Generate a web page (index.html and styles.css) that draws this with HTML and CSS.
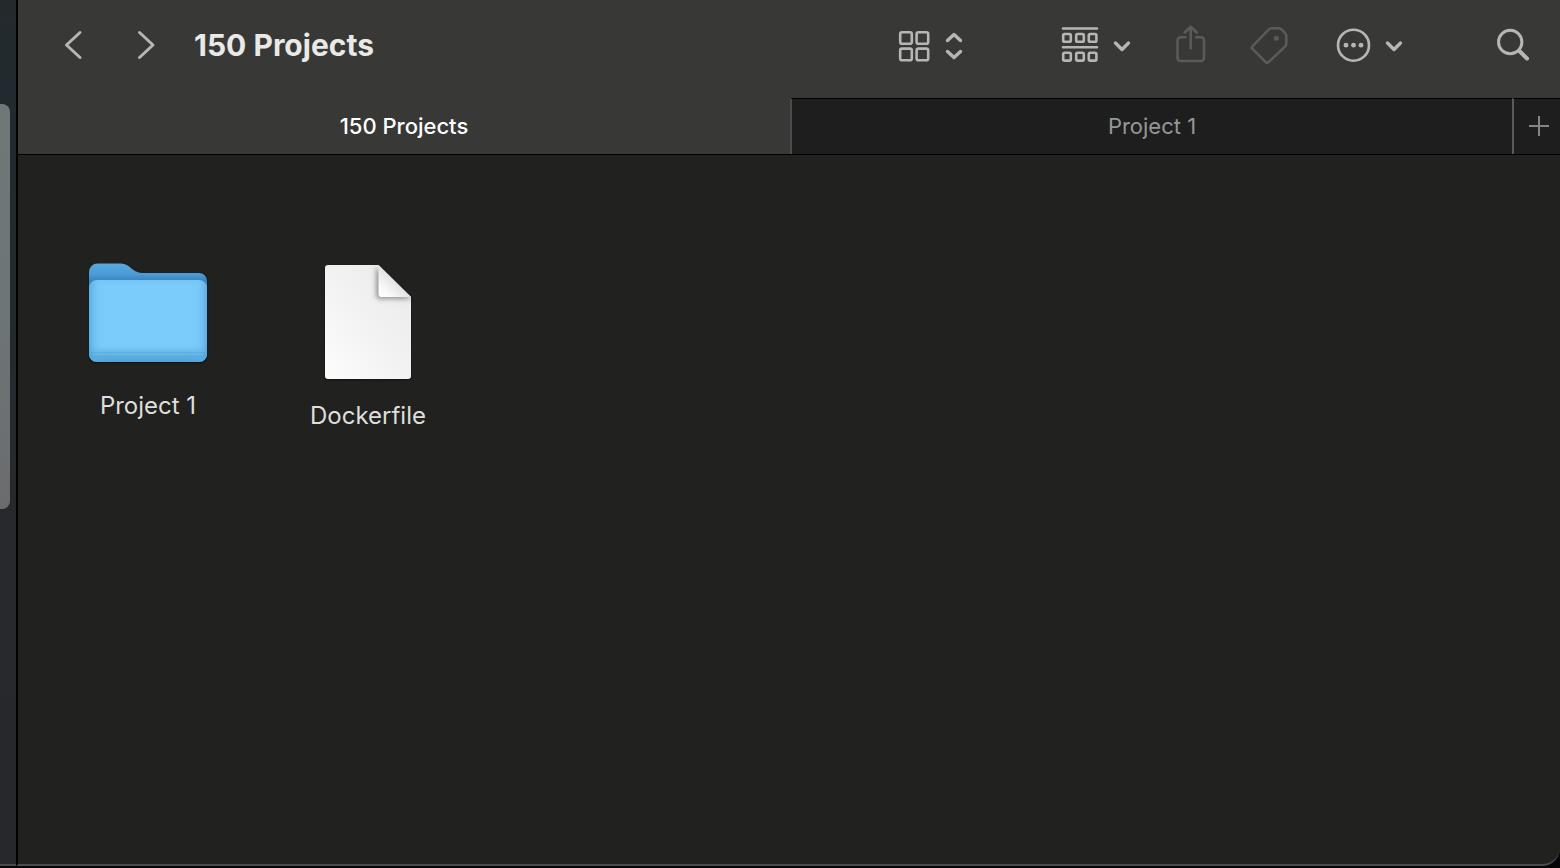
FILE: index.html
```html
<!DOCTYPE html>
<html lang="en">
<head>
<meta charset="utf-8">
<meta name="viewport" content="width=device-width, initial-scale=1">
<title>150 Projects</title>
<link rel="stylesheet" href="styles.css">
</head>
<body>
<div class="desktop">
  <aside class="strip"><div class="strip-thumb"></div></aside>
  <div class="window">
    <header class="toolbar">
      <nav class="history">
        <button class="tool" type="button" aria-label="Back">
          <svg width="18" height="30" viewBox="0 0 18 30"><path class="line line-nav" d="M16 2.500 2.500 15 16 27.500"/></svg>
        </button>
        <button class="tool" type="button" aria-label="Forward">
          <svg width="18" height="30" viewBox="0 0 18 30"><path class="line line-nav" d="M2.500 2.500 16 15 2.500 27.500"/></svg>
        </button>
      </nav>
      <h1 class="title">150 Projects</h1>
      <div class="actions">
        <button class="tool" type="button" aria-label="View as icons">
          <svg width="66" height="34" viewBox="0 -2 66 34">
            <g class="line">
              <rect x="2.200" y="2.200" width="11.600" height="11.600" rx="1.800"/>
              <rect x="18.600" y="2.200" width="11.600" height="11.600" rx="1.800"/>
              <rect x="2.200" y="18.600" width="11.600" height="11.600" rx="1.800"/>
              <rect x="18.600" y="18.600" width="11.600" height="11.600" rx="1.800"/>
            </g>
            <path class="line line-bold" d="M49.500 10.500 56 4.500l6.500 6M49.500 21.500l6.500 6 6.500-6"/>
          </svg>
        </button>
        <button class="tool tool-group" type="button" aria-label="Group items">
          <svg width="70" height="38" viewBox="0 0 70 38">
            <g class="line">
              <path d="M2 2.500h34M2 21.300h34"/>
              <rect x="2.200" y="8" width="7.600" height="7.800" rx="1.400"/>
              <rect x="15.200" y="8" width="7.600" height="7.800" rx="1.400"/>
              <rect x="27.800" y="8" width="7.600" height="7.800" rx="1.400"/>
              <rect x="2.200" y="26.800" width="7.600" height="7.800" rx="1.400"/>
              <rect x="15.200" y="26.800" width="7.600" height="7.800" rx="1.400"/>
              <rect x="27.800" y="26.800" width="7.600" height="7.800" rx="1.400"/>
            </g>
            <path class="line line-bold" d="M54.500 17l6.500 6.500 6.500-6.500"/>
          </svg>
        </button>
        <button class="tool" type="button" aria-label="Share" disabled>
          <svg width="31" height="40" viewBox="0 0 31 40">
            <path class="line line-off" d="M10.500 12.300H5.500A3 3 0 0 0 2.500 15.300v17.700a3 3 0 0 0 3 3h20.500a3 3 0 0 0 3-3V15.300a3 3 0 0 0-3-3H21M15.700 23.500V2M9.700 7.500l6-5.700 6 5.700"/>
          </svg>
        </button>
        <button class="tool" type="button" aria-label="Edit tags" disabled>
          <svg width="38" height="38" viewBox="0 0 38 38">
            <path class="line line-off" d="M21.800 2.200h6.500q2.200 0 3.600 1.500l3 3.200q1.400 1.500 1.400 3.500v7q0 2-1.400 3.400L18.600 36q-1.500 1.500-3 0L2.700 23.200q-1.500-1.500 0-3L18.600 3.600q1.400-1.400 3.200-1.400z"/>
            <circle class="dot-off" cx="26.400" cy="12.200" r="2.500"/>
          </svg>
        </button>
        <button class="tool tool-more" type="button" aria-label="More actions">
          <svg width="67" height="34" viewBox="0 0 67 34">
            <circle class="line" cx="17.500" cy="17.200" r="15.500"/>
            <g class="dot"><circle cx="10" cy="17.200" r="2.400"/><circle cx="17.500" cy="17.200" r="2.400"/><circle cx="25" cy="17.200" r="2.400"/></g>
            <path class="line line-bold" d="M51.500 15l6.500 6.500 6.500-6.500"/>
          </svg>
        </button>
        <button class="tool tool-search" type="button" aria-label="Search">
          <svg width="34" height="34" viewBox="0 0 34 34">
            <circle class="line line-lens" cx="14.200" cy="14" r="11.700"/>
            <path class="line line-handle" d="M23.500 23l7.500 7.500"/>
          </svg>
        </button>
      </div>
    </header>
    <div class="tabs">
      <button class="tab tab-active" type="button">150 Projects</button>
      <button class="tab tab-idle" type="button">Project 1</button>
      <button class="tab-add" type="button" aria-label="New tab">
        <svg width="22" height="22" viewBox="0 0 22 22"><path class="plus" d="M11 1v20M1 11h20"/></svg>
      </button>
    </div>
    <main class="files">
      <figure class="file">
        <svg width="120" height="107" viewBox="0 0 120 107">
          <defs>
            <linearGradient id="folder-back" x1="0" y1="0" x2="0" y2="1"><stop offset="0" stop-color="#5aaadf"/><stop offset=".11" stop-color="#4c9bd6"/><stop offset=".19" stop-color="#367dbd"/><stop offset="1" stop-color="#479dd2"/></linearGradient>
            <linearGradient id="folder-front" x1="0" y1="0" x2="0" y2="1"><stop offset="0" stop-color="#76c5f5"/><stop offset=".07" stop-color="#7bccfa"/><stop offset=".8" stop-color="#7bccfa"/><stop offset=".86" stop-color="#6ebfee"/><stop offset=".93" stop-color="#5fb0e2"/><stop offset="1" stop-color="#4da2d7"/></linearGradient>
            <linearGradient id="folder-edge"><stop offset="0" stop-color="#4ca1d8" stop-opacity=".7"/><stop offset=".08" stop-color="#65b8eb" stop-opacity=".15"/><stop offset=".15" stop-color="#7bccfa" stop-opacity="0"/><stop offset=".85" stop-color="#7bccfa" stop-opacity="0"/><stop offset=".93" stop-color="#65b8eb" stop-opacity=".15"/><stop offset="1" stop-color="#4ca1d8" stop-opacity=".7"/></linearGradient>
          </defs>
          <g class="shadow">
            <path fill="url(#folder-back)" d="M1 9a8.500 8.500 0 0 1 8.500-8.500H33c9 0 11.500 9.500 21 9.500h57a8 8 0 0 1 8 8v73a8 8 0 0 1-8 8H9a8 8 0 0 1-8-8z"/>
            <path fill="url(#folder-front)" d="M1 25a8 8 0 0 1 8-8h102a8 8 0 0 1 8 8v66a8 8 0 0 1-8 8H9a8 8 0 0 1-8-8z"/>
            <path fill="url(#folder-edge)" d="M1 25a8 8 0 0 1 8-8h102a8 8 0 0 1 8 8v66a8 8 0 0 1-8 8H9a8 8 0 0 1-8-8z"/>
            <path class="folder-groove" d="M1 89.500h118M2 93.500h116"/>
          </g>
        </svg>
        <figcaption class="name">Project 1</figcaption>
      </figure>
      <figure class="file">
        <svg width="88" height="117" viewBox="0 0 88 117">
          <defs>
            <linearGradient id="page" x1="0" y1="1" x2="1" y2="0"><stop offset="0" stop-color="#fdfdfd"/><stop offset=".5" stop-color="#f2f2f2"/><stop offset="1" stop-color="#eaeaea"/></linearGradient>
            <linearGradient id="curl" x1="0" y1="1" x2=".5" y2=".5"><stop offset="0" stop-color="#fff"/><stop offset=".4" stop-color="#f9f9f9"/><stop offset="1" stop-color="#e2e2e2"/></linearGradient>
            <clipPath id="page-clip"><path d="M4 2h50.500L87 34v79q0 3-3 3H4q-3 0-3-3V5q0-3 3-3z"/></clipPath>
            <filter id="soft" x="-50%" y="-50%" width="200%" height="200%"><feGaussianBlur stdDeviation="2.500"/></filter>
          </defs>
          <g class="shadow">
            <path fill="url(#page)" d="M4 2h50.500L87 34v79q0 3-3 3H4q-3 0-3-3V5q0-3 3-3z"/>
            <g clip-path="url(#page-clip)"><path class="curl-shadow" filter="url(#soft)" d="M52 4v28q0 4 4 4h32z"/></g>
            <path fill="url(#curl)" d="M54.500 2v29q0 3 3 3H87z"/>
          </g>
        </svg>
        <figcaption class="name">Dockerfile</figcaption>
      </figure>
    </main>
  </div>
</div>
</body>
</html>
```
FILE: styles.css
```css
* {
  box-sizing: border-box;
}

body {
  margin: 0;
  background: #060608;
  color: #dededc;
  font-family: Inter, "Liberation Sans", sans-serif;
}

button {
  margin: 0;
  padding: 0;
  border: 0;
  background: none;
  color: inherit;
  font: inherit;
}

svg {
  display: block;
  overflow: visible;
}

.desktop {
  display: flex;
  height: 100vh;
  padding-bottom: 2px;
}

.strip {
  flex: 0 0 16px;
  padding-top: 104px;
  background: linear-gradient(#242a2c 0, #222a2f 90px, #232a2d 40%, #27292c 62%, #27282b 100%);
  border-bottom: 2px solid #4a4a4a;
}

.strip-thumb {
  width: 10px;
  height: 405px;
  border-radius: 0 8px 8px 0;
  background: linear-gradient(#707779, #6d7576 50%, #6b6c6e);
}

.window {
  flex: 1;
  display: flex;
  flex-direction: column;
  min-width: 0;
  border-left: 2px solid #000;
  border-bottom: 2px solid #4c4c4b;
  border-bottom-right-radius: 18px;
  background: #212120;
}

.toolbar {
  display: flex;
  align-items: center;
  height: 98px;
  padding: 0 30px 8px 46px;
  background: #383836;
}

.history {
  display: flex;
  gap: 55px;
}

.title {
  margin: 0 0 0 39px;
  color: #e9e9e7;
  font-size: 30px;
  font-weight: 700;
  line-height: 36px;
  white-space: nowrap;
}

.actions {
  display: flex;
  align-items: center;
  gap: 44px;
  margin-left: auto;
}

.tool-group {
  margin-left: 53px;
}

.tool-more {
  margin-left: 4px;
}

.tool-search {
  margin-left: 49px;
}

.line {
  fill: none;
  stroke: #b6b6b4;
  stroke-width: 2.6;
  stroke-linecap: round;
  stroke-linejoin: round;
}

.line-nav {
  stroke-width: 3;
}

.line-lens {
  stroke-width: 3;
}

.line-bold {
  stroke-width: 3.4;
}

.line-handle {
  stroke-width: 4;
}

.line-off {
  stroke: #5a5a58;
}

.dot {
  fill: #b6b6b4;
}

.dot-off {
  fill: #5a5a58;
}

.tabs {
  display: flex;
  height: 57px;
  border-bottom: 1px solid #000;
  background: #1e1e1e;
}

.tab {
  min-width: 0;
  font-size: 22px;
  line-height: 28px;
}

.tab-active {
  flex: 773 1 0;
  background: #383836;
  color: #fff;
  font-weight: 500;
}

.tab-idle {
  flex: 721 1 0;
  padding-bottom: 2px;
  border-top: 1px solid #000;
  border-left: 2px solid #4b4b4a;
  color: #979796;
}

.tab-add {
  display: flex;
  flex: 0 0 48px;
  align-items: center;
  padding: 0 0 2px 14px;
  border-top: 1px solid #000;
  border-left: 2px solid #5a5a5a;
}

.plus {
  fill: none;
  stroke: #858584;
  stroke-width: 2;
}

.files {
  display: grid;
  grid-template-columns: repeat(auto-fill, 220px);
  align-items: start;
  padding: 108px 20px 20px;
}

.file {
  display: flex;
  flex-direction: column;
  align-items: center;
  gap: 21px;
  margin: 0;
}

.name {
  font-size: 24px;
  line-height: 30px;
}

.shadow {
  filter: drop-shadow(0 1px 1px rgba(0, 0, 0, 0.5));
}

.folder-groove {
  fill: none;
  stroke: #4fa3d8;
  stroke-opacity: 0.45;
}

.curl-shadow {
  fill: #777;
  fill-opacity: 0.75;
}
```
